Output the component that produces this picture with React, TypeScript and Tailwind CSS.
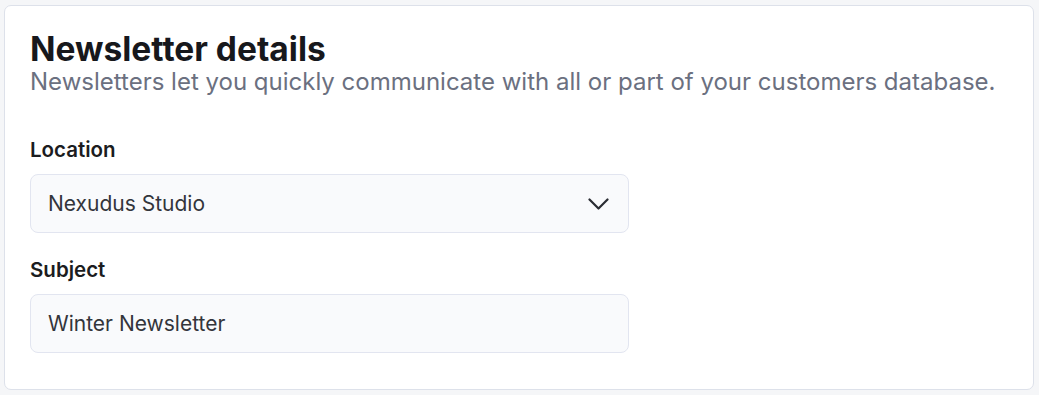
import React from "react";

export default function App() {
  return (
    <div className="min-h-screen w-full bg-[#f5f6f8] pt-[5px] pl-[4px]" style={{ fontFamily: "Inter, 'Noto Sans', sans-serif" }}>
      <div className="w-[1030px] h-[385px] rounded-[7px] border border-[#dde1ea] bg-white px-[25px] pt-[24px]">
        <h2 className="text-[33.5px] leading-[38px] font-bold text-[#17181c]">Newsletter details</h2>
        <p className="text-[24px] leading-[28px] text-[#6b7080]">
          Newsletters let you quickly communicate with all or part of your customers database.
        </p>
        <div className="mt-[42px] flex flex-col w-[599px]">
          <label className="text-[20.5px] leading-[24px] font-semibold text-[#1b1c20]">Location</label>
          <div className="mt-[12px] h-[59px] rounded-[8px] border border-[#e2e5f0] bg-[#f9fafc] flex items-center justify-between pl-[17px] pr-[19px]">
            <span className="text-[21px] text-[#33353b]">Nexudus Studio</span>
            <svg width="21" height="12" viewBox="0 0 21 12" fill="none" stroke="#2a2c33" strokeWidth="2.2" strokeLinecap="round" strokeLinejoin="round">
              <path d="M1.5 1.5l9 9 9-9" />
            </svg>
          </div>
          <label className="mt-[25px] text-[20.5px] leading-[24px] font-semibold text-[#1b1c20]">Subject</label>
          <div className="mt-[12px] h-[59px] rounded-[8px] border border-[#e2e5f0] bg-[#f9fafc] flex items-center pl-[17px]">
            <span className="text-[21px] text-[#33353b]">Winter Newsletter</span>
          </div>
        </div>
      </div>
    </div>
  );
}
